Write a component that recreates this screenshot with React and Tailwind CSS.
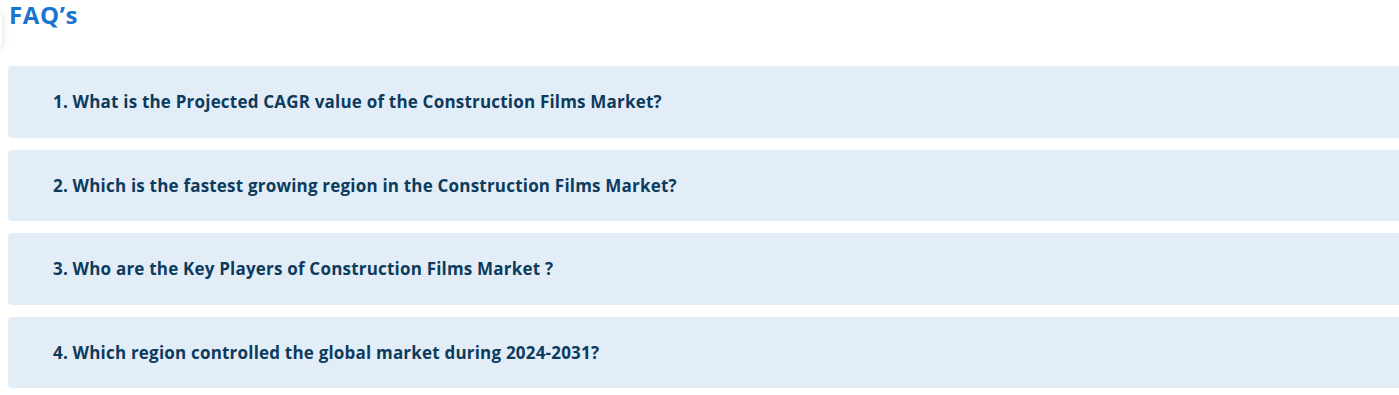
export default function App() {
  const qs = [
    "1. What is the Projected CAGR value of the Construction Films Market?",
    "2. Which is the fastest growing region in the Construction Films Market?",
    "3. Who are the Key Players of Construction Films Market ?",
    "4. Which region controlled the global market during 2024-2031?",
  ];
  return (
    <div className="w-[1399px] h-[395px] overflow-hidden bg-white relative" style={{ fontFamily: "'Open Sans', 'Noto Sans', sans-serif" }}>
      <div className="absolute left-[-14px] top-[10px] w-[16px] h-[40px] rounded-full shadow-[0_0_10px_rgba(0,0,0,0.12)]" />
      <h2 className="pl-[9px] text-[24px] leading-[30px] font-bold text-[#1b75d0] tracking-[0.6px]">FAQ’s</h2>
      <div className="flex flex-col gap-[12px] pl-[8px] mt-[36px] w-[1420px]">
        {qs.map((q) => (
          <div key={q} className="h-[71.5px] rounded-[4px] bg-[#e2edf7] flex items-center pl-[45px]">
            <span className="text-[17px] font-bold text-[#0c3b5d] tracking-[0.2px]">{q}</span>
          </div>
        ))}
      </div>
    </div>
  );
}
